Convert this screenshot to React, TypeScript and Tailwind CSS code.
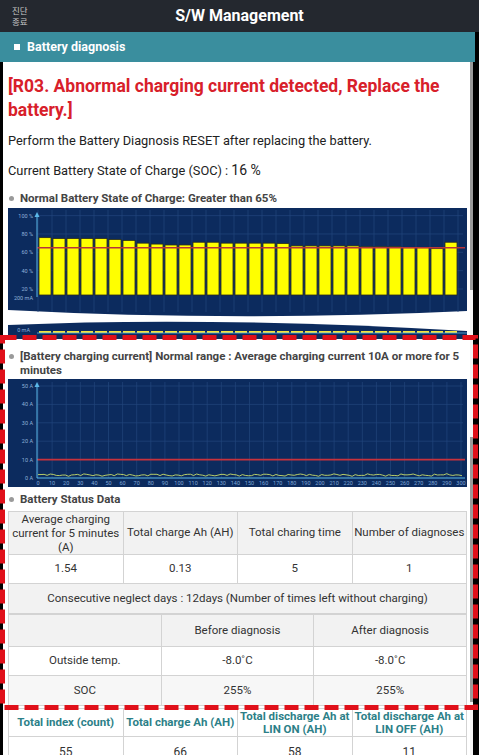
import { FC } from "react";

const socBars = [76, 75, 75, 75, 75, 74, 73, 70, 69, 68, 68, 71, 71, 70, 70, 70, 70, 69.5, 67, 67, 67, 67, 67, 66, 66, 66, 65, 65, 64, 71];

// charge current trace, small noise around 1.5A
const wiggle = Array.from({ length: 140 }, (_, i) => {
  const n = Math.sin(i * 1.7) * 0.6 + Math.sin(i * 0.53) * 0.5 + Math.cos(i * 2.9) * 0.4;
  return [30 + i * 3.05, 96 - n];
});

const SocChart: FC = () => {
  const y = (p: number) => 81 - (p - 20) * 0.917;
  return (
    <svg width="459" height="131" className="block">
      <path d="M0 0 H459 V103 Q230 114 0 102 Z" fill="#0c2b5e" />
      {Array.from({ length: 31 }, (_, i) => (
        <line key={i} x1={30 + i * 14} y1={2} x2={30 + i * 14} y2={104} stroke="#23467c" strokeWidth="0.7" />
      ))}
      {[100, 80, 60, 40, 20].map((p) => (
        <line key={p} x1={29} y1={y(p)} x2={455} y2={y(p)} stroke="#23467c" strokeWidth="0.7" />
      ))}
      {socBars.map((p, i) => (
        <rect key={i} x={31 + i * 14} y={y(p)} width={12} height={87 - y(p)} fill="#ffff00" stroke="#2b2b1a" strokeWidth="0.8" />
      ))}
      <line x1={29} y1={y(65)} x2={457} y2={y(65)} stroke="#b8343a" strokeWidth="1.3" />
      <line x1={29} y1={89} x2={29} y2={6} stroke="#5bb8e8" strokeWidth="1" />
      <path d="M26.5 9 L29 4 L31.5 9 Z" fill="#5bb8e8" />
      {[["100 %", 100], ["80 %", 80], ["60 %", 60], ["40 %", 40], ["20 %", 20]].map(([t, p]) => (
        <text key={t as string} x={25} y={y(p as number) + 2} fontSize="5.5" fill="#8fb0d8" textAnchor="end" fontFamily="Roboto">{t}</text>
      ))}
      <text x={25} y={92} fontSize="5.5" fill="#8fb0d8" textAnchor="end" fontFamily="Roboto">200 mA</text>
      {/* torn lower strip */}
      <path d="M0 117 Q200 108 459 123 V131 H0 Z" fill="#0c2b5e" />
      {socBars.map((_, i) => (
        <rect key={i} x={31 + i * 14} y={123} width={12} height={2} fill="#f4e23a" />
      ))}
      <line x1={29} y1={125} x2={459} y2={125} stroke="#5bb8e8" strokeWidth="0.8" />
      <text x={22} y={124} fontSize="5.5" fill="#8fb0d8" textAnchor="end" fontFamily="Roboto">0 mA</text>
    </svg>
  );
};

const CurrentChart: FC = () => {
  const y = (a: number) => 99 - a * 1.84;
  return (
    <svg width="459" height="108" className="block">
      <rect width="459" height="108" fill="#0c2b5e" />
      {Array.from({ length: 31 }, (_, i) => (
        <line key={i} x1={30 + i * 14.1} y1={3} x2={30 + i * 14.1} y2={99} stroke="#23467c" strokeWidth="0.7" />
      ))}
      {[50, 40, 30, 20].map((a) => (
        <line key={a} x1={29} y1={y(a)} x2={455} y2={y(a)} stroke="#23467c" strokeWidth="0.7" />
      ))}
      <line x1={29} y1={y(10)} x2={457} y2={y(10)} stroke="#c8323c" strokeWidth="1.6" />
      <polyline points={wiggle.map(([a, b]) => `${a},${b}`).join(" ")} fill="none" stroke="#c9df6a" strokeWidth="0.9" />
      <line x1={29} y1={99} x2={457} y2={99} stroke="#5bb8e8" strokeWidth="1" />
      <line x1={29} y1={99} x2={29} y2={5} stroke="#5bb8e8" strokeWidth="1" />
      <path d="M26.5 8 L29 3 L31.5 8 Z" fill="#5bb8e8" />
      {[50, 40, 30, 20, 10, 0].map((a) => (
        <text key={a} x={25} y={y(a) + 2} fontSize="5.5" fill="#8fb0d8" textAnchor="end" fontFamily="Roboto">{a} A</text>
      ))}
      {Array.from({ length: 31 }, (_, i) => (
        <text key={i} x={30 + i * 14.1} y={106} fontSize="5.5" fill="#7fa6d6" textAnchor="middle" fontFamily="Roboto">{i * 10}</text>
      ))}
    </svg>
  );
};

const th = "border border-[#d3d3d3] bg-[#f2f2f2] font-normal text-center align-middle";
const td = "border border-[#d3d3d3] text-center align-middle";

const App: FC = () => {
  return (
    <div className="w-[479px] h-[755px] bg-black overflow-hidden relative font-['Roboto',sans-serif]">
      {/* Top bar */}
      <div className="h-[32px] bg-[#24282f] flex items-center relative">
        <div className="pl-[12px] text-[8.5px] leading-[11px] text-[#c8c8c8] font-['Noto_Sans_CJK_KR',sans-serif] relative z-10">
          <div>진단</div>
          <div>종료</div>
        </div>
        <div className="absolute left-[60px] right-[60px] inset-y-0 flex items-center justify-center text-white font-bold text-[16px]">S/W Management</div>
      </div>
      <div className="h-[30px] bg-[#3a8e9e] flex items-center pl-[14px] gap-[7px] text-white font-bold text-[12.5px] w-[475px]">
        <span className="w-[6px] h-[6px] bg-white" />
        Battery diagnosis
      </div>

      <div className="flex">
        <div className="ml-[3px] w-[467px] bg-white pl-[5px] pr-[3px] h-[693px]">
          <div className="mt-[12px] text-[#d8202a] font-bold text-[17.5px] leading-[24px]">
            [R03. Abnormal charging current detected, Replace the battery.]
          </div>
          <div className="mt-[9px] text-[12.8px] leading-[20px] text-[#222]">
            Perform the Battery Diagnosis RESET after replacing the battery.
          </div>
          <div className="mt-[9px] text-[12.8px] leading-[20px] text-[#222]">
            Current Battery State of Charge (SOC) : <span className="text-[14px]">16 %</span>
          </div>
          <div className="mt-[10px] flex items-center gap-[6px] text-[11.5px] leading-[14px] font-bold text-[#444]">
            <span className="w-[5px] h-[5px] rounded-full bg-[#9a9a9a] ml-[1px]" />
            Normal Battery State of Charge: Greater than 65%
          </div>
          <div className="mt-[3px]">
            <SocChart />
          </div>

          <div className="mt-[10px] flex text-[11.5px] leading-[14px] font-bold text-[#444]">
            <span className="w-[5px] h-[5px] rounded-full bg-[#9a9a9a] ml-[1px] mt-[5px] shrink-0" />
            <span className="ml-[6px]">[Battery charging current] Normal range : Average charging current 10A or more for 5 minutes</span>
          </div>
          <div className="mt-[2px]">
            <CurrentChart />
          </div>

          <div className="mt-[5px] flex items-center gap-[6px] text-[11.5px] leading-[14px] font-bold text-[#444]">
            <span className="w-[5px] h-[5px] rounded-full bg-[#9a9a9a] ml-[1px]" />
            Battery Status Data
          </div>

          <table className="mt-[5px] w-[459px] border-collapse table-fixed text-[11.5px] text-[#333]">
            <tbody>
              <tr className="h-[43px]">
                <th className={`${th} leading-[14px]`}>Average charging current for 5 minutes (A)</th>
                <th className={th}>Total charge Ah (AH)</th>
                <th className={th}>Total charing time</th>
                <th className={`${th} whitespace-nowrap`}>Number of diagnoses</th>
              </tr>
              <tr className="h-[29px]">
                <td className={td}>1.54</td>
                <td className={td}>0.13</td>
                <td className={td}>5</td>
                <td className={td}>1</td>
              </tr>
              <tr className="h-[30px]">
                <td colSpan={4} className={`${td} bg-[#f2f2f2]`}>
                  Consecutive neglect days : 12days (Number of times left without charging)
                </td>
              </tr>
            </tbody>
          </table>
          <table className="w-[459px] border-collapse table-fixed text-[11.5px] text-[#333]">
            <tbody>
              <tr className="h-[32px]">
                <th className={th}></th>
                <th className={th}>Before diagnosis</th>
                <th className={th}>After diagnosis</th>
              </tr>
              <tr className="h-[29px]">
                <td className={td}>Outside temp.</td>
                <td className={td}>-8.0˚C</td>
                <td className={td}>-8.0˚C</td>
              </tr>
              <tr className="h-[30px] bg-[#f7f7f7]">
                <td className={td}>SOC</td>
                <td className={td}>255%</td>
                <td className={td}>255%</td>
              </tr>
            </tbody>
          </table>
          <table className="mt-[2px] w-[459px] border-collapse table-fixed text-[11.5px]">
            <tbody>
              <tr className="h-[28px] text-[#2c7f88] font-bold leading-[13px]">
                <th className={`${td} font-bold`}>Total index (count)</th>
                <th className={`${td} font-bold`}>Total charge Ah (AH)</th>
                <th className={`${td} font-bold`}>Total discharge Ah at LIN ON (AH)</th>
                <th className={`${td} font-bold`}>Total discharge Ah at LIN OFF (AH)</th>
              </tr>
              <tr className="h-[30px] text-[#333] text-[12px]">
                <td className={td}>55</td>
                <td className={td}>66</td>
                <td className={td}>58</td>
                <td className={td}>11</td>
              </tr>
            </tbody>
          </table>
        </div>
        <div className="w-[3px] bg-[#f4f4f4]" />
      </div>

      {/* scroll thumbs */}
      <div className="absolute left-[470px] top-[62px] w-[3px] h-[228px] bg-[#9a9a9a]" />
      <div className="absolute left-[470px] top-[437px] w-[3px] h-[265px] bg-[#9a9a9a]" />

      {/* annotation box */}
      <svg className="absolute left-0 top-0 pointer-events-none" width="479" height="755">
        <rect x="2.5" y="337.5" width="473" height="370" fill="none" stroke="#e0101a" strokeWidth="5" strokeDasharray="14 6" />
      </svg>
    </div>
  );
};

export default App;
